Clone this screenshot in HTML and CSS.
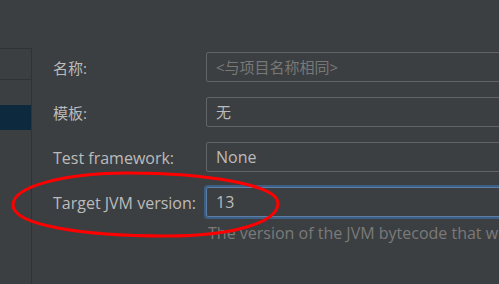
FILE: index.html
```html
<!DOCTYPE html>
<html lang="zh">
<head>
  <meta charset="UTF-8">
  <title>New Project</title>
  <link rel="stylesheet" href="styles.css">
</head>
<body>
  <div class="side">
    <div class="side-row"></div>
    <div class="side-gap"></div>
    <div class="side-row selected"></div>
  </div>

  <div class="form">
    <label class="label cjk">名称:</label>
    <div class="field cjk placeholder">&lt;与项目名称相同&gt;</div>

    <label class="label cjk">模板:</label>
    <div class="field cjk">无</div>

    <label class="label">Test framework:</label>
    <div class="field">None</div>

    <label class="label">Target JVM version:</label>
    <div class="field focused">13</div>

    <div></div>
    <div class="hint">The version of the JVM bytecode that will be generated</div>
  </div>

  <svg class="mark" width="499" height="284" viewBox="0 0 499 284">
    <path d="M13,205 C13,186 66,173 128,173 C206,173 278,185 278,203 C278,223 232,236 166,236 C82,236 13,225 13,205 Z"
          fill="none" stroke="#ff0000" stroke-width="3"/>
  </svg>
</body>
</html>
```

FILE: styles.css
```css
body {
  margin: 0;
  width: 499px;
  height: 284px;
  overflow: hidden;
  background-color: #3c3f41;
  display: flex;
  position: relative;
  font-family: "Open Sans", "Noto Sans CJK SC", sans-serif;
  font-size: 16px;
  color: #bbbbbb;
}

.side {
  margin-top: 48px;
  width: 31px;
  flex-shrink: 0;
  border-top: 1px solid #323232;
  border-right: 1px solid #323232;
}

.side-row {
  height: 30px;
  border-bottom: 1px solid #323232;
}

.side-gap {
  height: 25px;
}

.side-row.selected {
  height: 25px;
  border-bottom: none;
  background-color: #0d293e;
}

.form {
  padding: 52px 0 0 21px;
  display: grid;
  grid-template-columns: 153px 320px;
  row-gap: 15px;
  align-items: center;
  align-content: start;
}

.label {
  color: #bbbbbb;
  white-space: nowrap;
  padding-top: 2px;
}

.label.cjk {
  padding-top: 0;
}

.cjk {
  font-size: 15px;
}

.field {
  height: 28px;
  line-height: 28px;
  padding: 0 9px;
  border: 1px solid #646464;
  border-radius: 2px;
  white-space: nowrap;
  color: #bbbbbb;
}

.field.placeholder {
  color: #787878;
}

.field.focused {
  border-color: #5a7ea6;
  box-shadow: 0 0 0 2px #3d5f84;
}

.hint {
  margin-top: -10px;
  padding-left: 2px;
  color: #7a7a7a;
  white-space: nowrap;
}

.mark {
  position: absolute;
  top: 0;
  left: 0;
  pointer-events: none;
}
```
